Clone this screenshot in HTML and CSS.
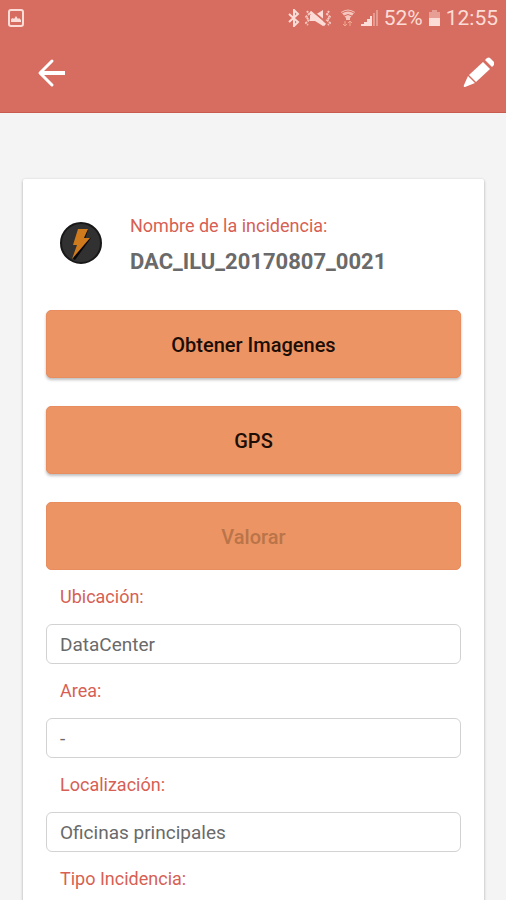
FILE: index.html
```html
<!DOCTYPE html>
<html lang="es">
<head>
  <meta charset="utf-8">
  <meta name="viewport" content="width=device-width, initial-scale=1">
  <title>Incidencia</title>
  <link rel="stylesheet" href="styles.css">
</head>
<body>
  <div class="app">
    <header class="header">
      <div class="status">
        <svg class="status-shot" width="16" height="18" viewBox="0 0 16 18" aria-hidden="true">
          <rect x="1" y="1" width="14" height="16" rx="2" fill="none" stroke="currentColor" stroke-width="2"/>
          <path d="M3 13v-3l2-1 1 1 2-3 2 3 1-1 2 2v2z" fill="currentColor"/>
        </svg>
        <div class="status-right">
          <svg width="12" height="18" viewBox="0 0 12 18" fill="none" stroke="currentColor" stroke-width="2" aria-hidden="true">
            <path d="M1 5l9 8-4 4V1l4 4-9 8"/>
          </svg>
          <svg class="status-mute" width="26" height="18" viewBox="0 0 26 18" aria-hidden="true">
            <path d="M5 6h5l8-5v16l-8-5H5z" fill="currentColor"/>
            <path d="M6 1l17 14" stroke="#d76d60" stroke-width="2"/>
            <path d="M5 3l15 13" stroke="currentColor" stroke-width="3"/>
            <path d="M2 2l2 3-3 3 3 3-3 3 2 2M24 2l-2 3 3 3-3 3 3 3-2 2" fill="none" stroke="currentColor" stroke-width="2" stroke-dasharray="2 1" opacity=".8"/>
          </svg>
          <svg class="status-wifi" width="14" height="18" viewBox="0 0 14 18" aria-hidden="true">
            <path d="M0 3q7-5 14 0l-5 6v2H5V9z" fill="currentColor" opacity=".8"/>
            <path d="M1 4q6-4 12 0M3 7q4-3 8 0" fill="none" stroke="#d76d60"/>
            <path d="M4 17v-5M2 15l2 2 2-2M9 17v-5M7 14l2-2 2 2" fill="none" stroke="#f0a98d" stroke-width="1"/>
          </svg>
          <svg class="status-signal" width="17" height="18" viewBox="0 0 17 18" fill="currentColor" aria-hidden="true">
            <path d="M0 15h3v2H0zM3 13h3v4H3zM6 10h3v7H6zM9 7h2v10H9z"/>
            <path d="M12 4h2v13h-2zM15 1h2v16h-2z" opacity=".4"/>
          </svg>
          <span>52%</span>
          <svg class="status-battery" width="11" height="18" viewBox="0 0 11 18" fill="currentColor" aria-hidden="true">
            <path d="M3 1h5v2h3v6H0V3h3z" opacity=".45"/>
            <path d="M0 9h11v8H0z"/>
          </svg>
          <span>12:55</span>
        </div>
      </div>
      <nav class="toolbar">
        <button class="icon-button" type="button" aria-label="Volver">
          <svg width="32" height="32" viewBox="0 0 32 32" fill="none" stroke="currentColor" stroke-linecap="round" stroke-linejoin="round" aria-hidden="true">
            <path d="M16 5L4 17l12 12" stroke-width="3"/>
            <path d="M5 17h24" stroke-width="4" stroke-linecap="butt"/>
          </svg>
        </button>
        <button class="icon-button" type="button" aria-label="Editar">
          <svg width="32" height="32" viewBox="0 0 32 32" fill="currentColor" aria-hidden="true">
            <path d="M21 6l7 7-14 13-7-7z"/>
            <path d="M23 4l2-2q2-1 3 0l4 4q1 1 0 3l-2 2z"/>
            <path d="M6 20l7 7-10 4q-2 0-1-2z"/>
          </svg>
        </button>
      </nav>
    </header>

    <main class="content">
      <form class="card">
        <div class="summary">
          <svg class="summary-icon" width="44" height="44" viewBox="0 0 44 44" aria-hidden="true">
            <circle cx="22" cy="22" r="20" fill="#303130" stroke="#171817" stroke-width="2"/>
            <path d="M20 10l9-1-3 9 6-1-16 22-2-1 6-13z" fill="#080808"/>
            <path d="M19 8h10l-4 9h6L13 38l5-14h-4z" fill="#d07a1e"/>
          </svg>
          <div>
            <div class="summary-label">Nombre de la incidencia:</div>
            <div class="summary-name">DAC_ILU_20170807_0021</div>
          </div>
        </div>

        <div class="actions">
          <button class="action" type="button">Obtener Imagenes</button>
          <button class="action" type="button">GPS</button>
          <button class="action" type="button" disabled>Valorar</button>
        </div>

        <label class="field-label" for="ubicacion">Ubicación:</label>
        <input class="field-input" id="ubicacion" type="text" value="DataCenter" readonly>
        <label class="field-label" for="area">Area:</label>
        <input class="field-input" id="area" type="text" value="-" readonly>
        <label class="field-label" for="localizacion">Localización:</label>
        <input class="field-input" id="localizacion" type="text" value="Oficinas principales" readonly>
        <label class="field-label" for="tipo">Tipo Incidencia:</label>
        <input class="field-input" id="tipo" type="text" readonly>
      </form>
    </main>
  </div>
</body>
</html>
```
FILE: styles.css
```css
* {
  box-sizing: border-box;
}

body {
  margin: 0;
  background: #f4f4f4;
  color: #6a6a6a;
  font-family: Roboto, "Liberation Sans", sans-serif;
}

button,
input {
  font: inherit;
}

.app {
  display: flex;
  flex-direction: column;
  height: 100vh;
}

.header {
  flex: none;
  background: #d76d60;
  border-bottom: 1px solid #c95a4e;
  color: #fff;
}

.status {
  display: flex;
  justify-content: space-between;
  align-items: center;
  height: 36px;
  padding: 0 8px;
  color: #fbdcd6;
  font-size: 21px;
}

.status-right {
  display: flex;
  align-items: center;
  gap: 6px;
}

.status-mute {
  margin-left: -1px;
}

.status-wifi {
  margin-left: 4px;
}

.toolbar {
  display: flex;
  justify-content: space-between;
  align-items: center;
  height: 76px;
  padding: 0 12px 4px 36px;
}

.icon-button {
  display: flex;
  padding: 0;
  border: 0;
  background: none;
  color: #fff;
}

.content {
  flex: 1;
  min-height: 0;
  overflow-y: auto;
  scrollbar-width: none;
  padding: 66px 22px 22px 23px;
}

.card {
  padding: 36px 23px 24px;
  background: #fff;
  border-radius: 2px;
  box-shadow: 0 1px 3px rgba(0, 0, 0, 0.32);
}

.summary {
  display: flex;
  gap: 27px;
  padding: 0 13px 36px;
}

.summary-icon {
  flex: none;
  margin-top: 6px;
}

.summary-label {
  color: #d75f54;
  font-size: 18px;
  line-height: 22px;
}

.summary-name {
  margin-top: 12px;
  font-size: 22px;
  font-weight: 700;
  line-height: 25px;
}

.actions {
  display: grid;
  gap: 28px;
}

.action {
  height: 68px;
  padding: 2px 12px 0;
  border: 1px solid #e88d5f;
  border-radius: 5px;
  background: #ec9464;
  box-shadow: 0 2px 3px rgba(0, 0, 0, 0.25);
  color: #1c0d05;
  font-size: 20px;
  font-weight: 500;
}

.action:disabled {
  box-shadow: none;
  color: #b97449;
}

.field-label {
  display: block;
  padding: 0 14px;
  color: #d75f54;
  font-size: 18px;
  line-height: 54px;
}

.field-input {
  display: block;
  width: 100%;
  height: 40px;
  padding: 0 13px;
  border: 1px solid #d2d2d2;
  border-radius: 6px;
  background: #fff;
  color: #6a6a6a;
  font-size: 19px;
}
```
